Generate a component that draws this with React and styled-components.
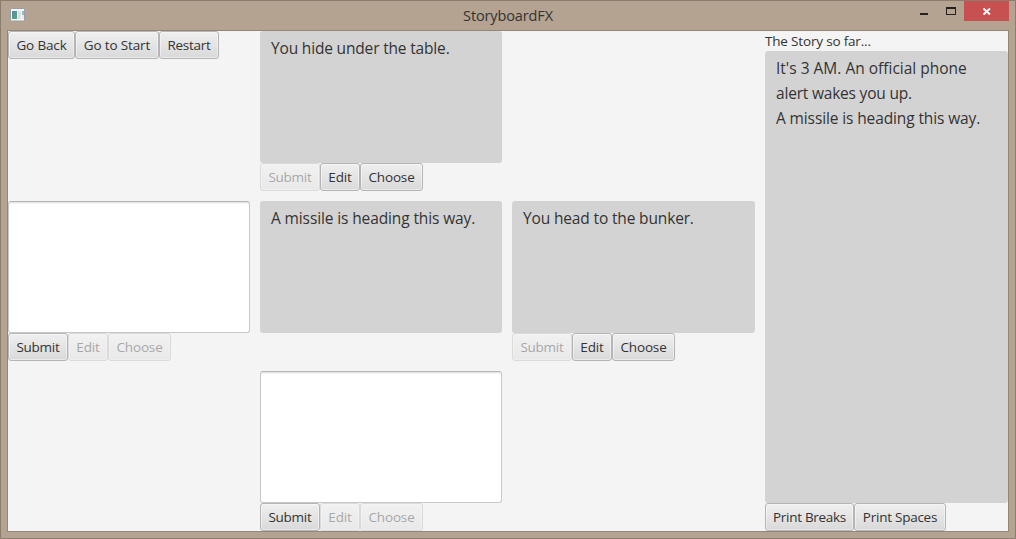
import React from "react";
import styled, { createGlobalStyle } from "styled-components";

const GlobalStyle = createGlobalStyle`
  * { box-sizing: border-box; }
  html, body { margin: 0; padding: 0; overflow: hidden; }
  body { font-family: "Open Sans", "Noto Sans", sans-serif; color: #333; }
`;

const Window = styled.div`
  width: 1016px;
  height: 539px;
  display: flex;
  flex-direction: column;
  background: #b5a391;
  border: 1px solid #8b7c6e;
  padding: 0 6px 6px;
`;

const TitleBar = styled.header`
  height: 29px;
  flex: none;
  display: grid;
  grid-template-columns: 98px 1fr 98px;
  align-items: start;
`;

const AppIcon = styled.svg`
  display: block;
  margin: 7px 0 0 3px;
`;

const Title = styled.h1`
  margin: 0;
  padding-top: 5px;
  text-align: center;
  font-size: 14.5px;
  line-height: 20px;
  font-weight: 400;
  letter-spacing: -0.12px;
`;

const WindowControls = styled.div`
  display: flex;
  justify-content: flex-end;
`;

const ControlIcon = styled.svg`
  display: block;
  flex: none;
  background: ${(p) => (p.$danger ? "#c75050" : "transparent")};
`;

const Client = styled.main`
  flex: 1;
  min-height: 0;
  display: grid;
  grid-template-columns: 242px 242px 243px 243px;
  grid-template-rows: repeat(3, 1fr);
  gap: 10px;
  background: #f4f4f4;
  border: 1px solid #958777;
`;

const Panel = styled.section`
  display: flex;
  flex-direction: column;
  min-width: 0;
  min-height: 0;
  grid-column: ${(p) => p.$col};
  grid-row: ${(p) => p.$row};
`;

const TextBox = styled.div`
  flex: ${(p) => (p.$grow ? "1" : "0 0 132px")};
  border-radius: 3px;
  padding: ${(p) => (p.$editable ? "5px 10px" : "5px 11px")};
  font-size: 15.5px;
  line-height: 25px;
  white-space: pre;
  background: ${(p) => (p.$editable ? "#fff" : "#d3d3d3")};
  border: ${(p) => (p.$editable ? "1px solid #c8c8c8" : "0")};
  border-top-color: #b5b5b5;
  box-shadow: ${(p) => (p.$editable ? "inset 0 2px 2px -1px #dedede" : "none")};
`;

const Line = styled.div`
  letter-spacing: ${(p) => p.$track || 0}px;
`;

const ButtonRow = styled.div`
  display: flex;
  height: 28px;
  flex: none;
`;

const Button = styled.button`
  width: ${(p) => p.$width}px;
  height: 28px;
  flex: none;
  padding: 0 0 1px;
  border: 1px solid #b5b5b5;
  border-radius: 3px;
  background: linear-gradient(#efefef, #d9d9d9);
  box-shadow: inset 0 0 0 1px rgba(255, 255, 255, 0.45);
  font: 13.5px/24px "Open Sans", "Noto Sans", sans-serif;
  letter-spacing: ${(p) => p.$track || 0}px;
  color: #333;
  white-space: nowrap;
  &:disabled { opacity: 0.4; }
`;

const Caption = styled.div`
  height: 20px;
  font-size: 13.5px;
  line-height: 20px;
  letter-spacing: -0.18px;
  white-space: nowrap;
`;

function Choice({ col, row, text, track, editing, controls = true }) {
  return (
    <Panel $col={col} $row={row}>
      <TextBox $editable={editing}>{text && <Line $track={track}>{text}</Line>}</TextBox>
      {controls && (
        <ButtonRow>
          <Button $width={60} $track={-0.25} disabled={!editing}>Submit</Button>
          <Button $width={40} $track={-0.15} disabled={editing}>Edit</Button>
          <Button $width={63} $track={-0.15} disabled={editing}>Choose</Button>
        </ButtonRow>
      )}
    </Panel>
  );
}

export default function App() {
  return (
    <>
      <GlobalStyle />
      <Window>
        <TitleBar>
          <AppIcon width="15" height="14" viewBox="0 0 15 14">
            <defs>
              <linearGradient id="screen" x1="0" y1="0" x2="0.6" y2="1">
                <stop offset="0" stopColor="#5b87a8" />
                <stop offset="1" stopColor="#4fa77c" />
              </linearGradient>
            </defs>
            <rect x="0.5" y="0.5" width="14" height="12.5" rx="1" fill="#f7f8f8" stroke="#9a9da1" />
            <rect x="2" y="3" width="5" height="8" fill="url(#screen)" />
            <rect x="8" y="3" width="3" height="8" fill="#dcdfe1" />
            <rect x="12" y="3" width="2" height="4" fill="#8fbfc4" />
            <rect x="12" y="7" width="2" height="4" fill="#e6ebe9" />
          </AppIcon>
          <Title>StoryboardFX</Title>
          <WindowControls>
            <ControlIcon width="27" height="20" viewBox="0 0 27 20">
              <rect x="9" y="12" width="8" height="2" fill="#222" />
            </ControlIcon>
            <ControlIcon width="26" height="20" viewBox="0 0 26 20">
              <path fill="#222" fillRule="evenodd" d="M8 6h10v8H8zM9 8v5h8V8z" />
            </ControlIcon>
            <ControlIcon $danger width="45" height="20" viewBox="0 0 45 20">
              <path d="M19.5 7.5l6.5 6M26 7.5l-6.5 6" stroke="#fff" strokeWidth="1.8" />
            </ControlIcon>
          </WindowControls>
        </TitleBar>
        <Client>
          <Panel $col={1} $row={1}>
            <ButtonRow>
              <Button $width={67} $track={-0.15}>Go Back</Button>
              <Button $width={84} $track={-0.15}>Go to Start</Button>
              <Button $width={60} $track={-0.3}>Restart</Button>
            </ButtonRow>
          </Panel>
          <Choice col={2} row={1} text="You hide under the table." track={-0.17} />
          <Choice col={1} row={2} editing />
          <Choice col={2} row={2} text="A missile is heading this way." track={-0.12} controls={false} />
          <Choice col={3} row={2} text="You head to the bunker." track={-0.15} />
          <Choice col={2} row={3} editing />
          <Panel $col={4} $row="1 / 4">
            <Caption>The Story so far...</Caption>
            <TextBox $grow>
              <Line>It's 3 AM. An official phone</Line>
              <Line $track={-0.2}>alert wakes you up.</Line>
              <Line $track={-0.12}>A missile is heading this way.</Line>
            </TextBox>
            <ButtonRow>
              <Button $width={89} $track={-0.3}>Print Breaks</Button>
              <Button $width={92} $track={-0.25}>Print Spaces</Button>
            </ButtonRow>
          </Panel>
        </Client>
      </Window>
    </>
  );
}
